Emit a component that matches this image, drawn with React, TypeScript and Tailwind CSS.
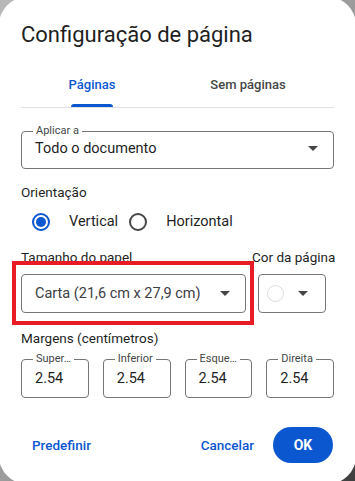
const blue = "#0b57d0";

function Caret() {
  return (
    <svg width="10" height="5" viewBox="0 0 10 5" className="shrink-0">
      <path d="M0 0h10L5 5z" fill="#444746" />
    </svg>
  );
}

function Radio({ checked }: { checked?: boolean }) {
  return (
    <span className="flex h-[40px] w-[40px] shrink-0 items-center justify-center">
      {checked ? (
        <span className="flex h-[18px] w-[18px] items-center justify-center rounded-full border-2 border-[#0b57d0]">
          <span className="h-[10px] w-[10px] rounded-full bg-[#0b57d0]" />
        </span>
      ) : (
        <span className="h-[18px] w-[18px] rounded-full border-2 border-[#444746]" />
      )}
    </span>
  );
}

function MarginField({ label, value }: { label: string; value: string }) {
  return (
    <div className="relative flex h-[39px] items-center rounded-[4px] border border-[#747775] pl-[13px]">
      <span className="absolute -top-[9px] left-[11px] bg-white px-[3px] text-[11px] leading-[16px] text-[#444746]">
        {label}
      </span>
      <span className="text-[14.5px] leading-[20px] text-[#1f1f1f]">{value}</span>
    </div>
  );
}

const margins = [
  { label: "Super…", value: "2.54" },
  { label: "Inferior", value: "2.54" },
  { label: "Esque…", value: "2.54" },
  { label: "Direita", value: "2.54" },
];

export default function App() {
  return (
    <div className="h-[481px] w-[355px] overflow-hidden bg-linear-to-br from-[#b8b8b8] via-[#9c9c9c] to-[#3f3f3f] font-['Roboto',sans-serif]">
      <div className="-ml-[1px] -mt-[3px] flex h-[487px] w-[357px] flex-col rounded-[28px] bg-white px-[22px] pt-[24px]">
        <h1 className="text-[22px] leading-[28px] text-[#1f1f1f]">Configuração de página</h1>

        <div className="mt-[26px] border-b border-[#e0e0e0]">
          <div className="-ml-[7px] grid w-[312px] grid-cols-2">
            <div className="flex flex-col items-center">
              <span className="text-[13px] font-medium leading-[20px]" style={{ color: blue }}>
                Páginas
              </span>
              <div className="mt-[9px] h-[3px] w-[42px] rounded-t-[3px] bg-[#0b57d0]" />
            </div>
            <div className="flex flex-col items-center">
              <span className="text-[13px] font-medium leading-[20px] text-[#444746]">Sem páginas</span>
              <div className="mt-[9px] h-[3px]" />
            </div>
          </div>
        </div>

        <div className="relative mt-[23px] flex h-[38px] items-center justify-between rounded-[4px] border border-[#747775] pb-[3px] pl-[13px] pr-[15px]">
          <span className="absolute -top-[9px] left-[11px] bg-white px-[3px] text-[11px] leading-[16px] text-[#444746]">
            Aplicar a
          </span>
          <span className="text-[14.5px] leading-[20px] text-[#1f1f1f]">Todo o documento</span>
          <Caret />
        </div>

        <div className="mt-[13px] text-[13.5px] leading-[20px] text-[#1f1f1f]">Orientação</div>
        <div className="flex h-[40px] items-center text-[14.5px] text-[#1f1f1f]">
          <Radio checked />
          <span className="ml-[8px]">Vertical</span>
          <Radio />
          <span className="ml-[8px]">Horizontal</span>
        </div>

        <div className="relative mt-[5px] flex">
          <div className="flex w-[225px] shrink-0 flex-col">
            <span className="whitespace-nowrap text-[13.5px] leading-[20px] text-[#1f1f1f]">Tamanho do papel</span>
            <div className="mt-[7px] flex h-[39px] items-center justify-between rounded-[4px] border border-[#747775] pl-[13px] pr-[15px]">
              <span className="whitespace-nowrap text-[14.5px] leading-[20px] text-[#3c4043]">
                Carta (21,6 cm x 27,9 cm)
              </span>
              <Caret />
            </div>
          </div>
          <div className="ml-[6px] flex flex-1 flex-col">
            <span className="whitespace-nowrap text-[13.5px] leading-[20px] text-[#1f1f1f]">Cor da página</span>
            <div className="ml-[6px] mt-[7px] flex h-[39px] w-[68px] items-center rounded-[4px] border border-[#747775] pl-[8px]">
              <span className="h-[17px] w-[17px] rounded-full border border-[#dadce0] bg-white" />
              <span className="ml-[14px]">
                <Caret />
              </span>
            </div>
          </div>
          <div className="pointer-events-none absolute -left-[9px] top-[14px] h-[64px] w-[242px] border-[4px] border-[#e81c24]" />
        </div>

        <div className="mt-[15px] text-[13.5px] leading-[20px] text-[#1f1f1f]">Margens (centímetros)</div>
        <div className="mt-[11px] grid grid-cols-4 gap-[14px]">
          {margins.map((m) => (
            <MarginField key={m.label} label={m.label} value={m.value} />
          ))}
        </div>

        <div className="mt-[29px] flex items-center">
          <button className="flex h-[36px] items-center px-[11px] text-[13.5px] font-medium text-[#0b57d0]">
            Predefinir
          </button>
          <div className="flex-1" />
          <button className="flex h-[36px] items-center px-[12px] text-[13.5px] font-medium text-[#0b57d0]">
            Cancelar
          </button>
          <button className="ml-[7px] mr-[1px] flex h-[36px] w-[60px] items-center justify-center rounded-full bg-[#0b57d0] text-[14px] font-bold text-white">
            OK
          </button>
        </div>
      </div>
    </div>
  );
}
